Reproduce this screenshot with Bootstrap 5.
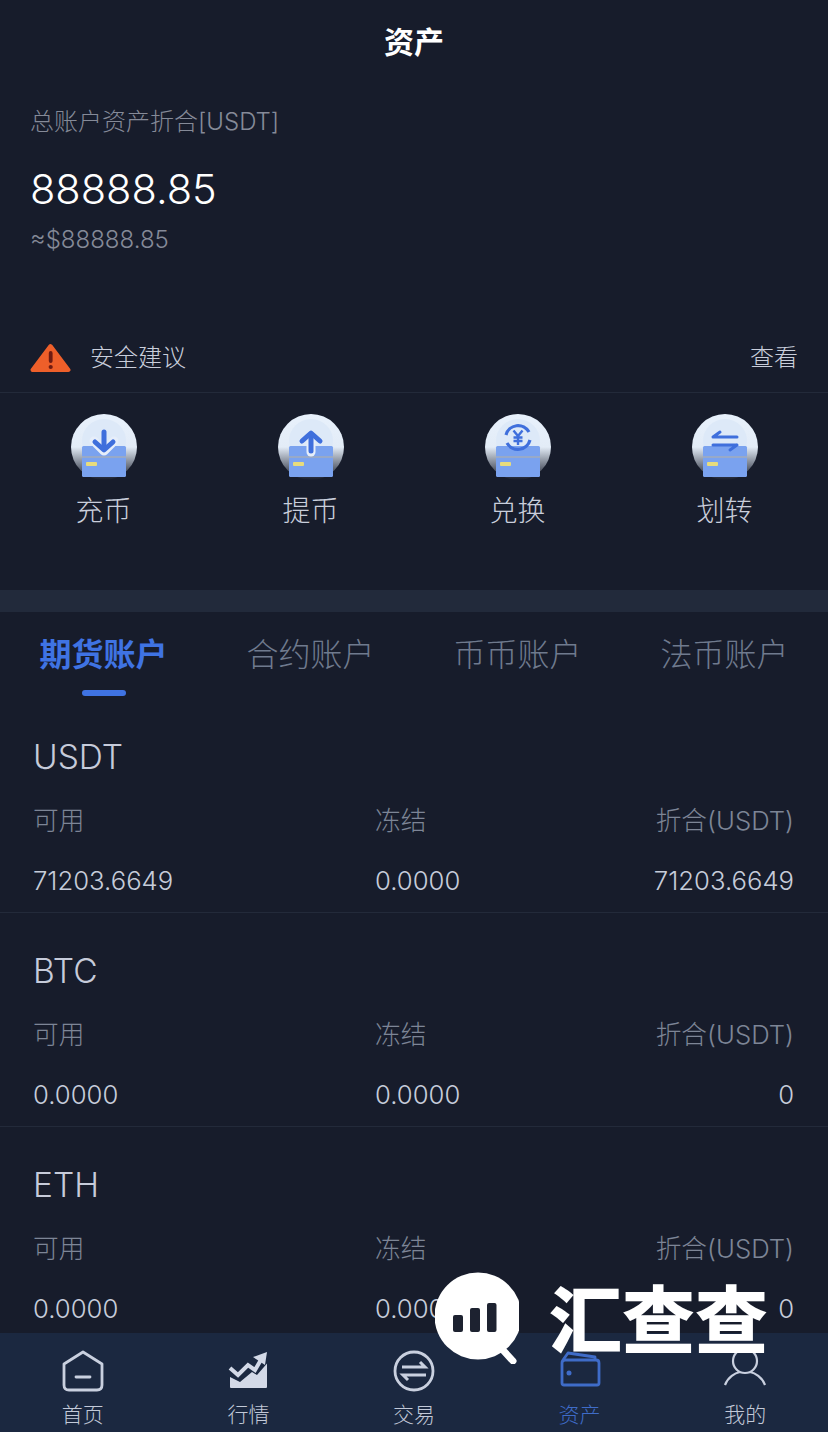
<!DOCTYPE html>
<html lang="zh-CN">
<head>
  <meta charset="UTF-8">
  <meta name="viewport" content="width=device-width, initial-scale=1.0">
  <title>资产</title>
  <link href="https://cdn.jsdelivr.net/npm/bootstrap@5.3.3/dist/css/bootstrap.min.css" rel="stylesheet" crossorigin="anonymous">
  <style>
    html, body { height: 100%; }
    body {
      background: #171c2b;
      font-family: Inter, "Noto Sans CJK SC", sans-serif;
      font-weight: 300;
      overflow: hidden;
    }
    .phone { position: relative; width: 828px; height: 1432px; overflow: hidden; }

    .page-title { height: 84px; line-height: 85px; font-size: 30px; font-weight: 700; color: #fff; text-align: center; }
    .summary { padding: 20px 30px 0; height: 238px; }
    .summary-label { font-size: 24px; line-height: 36px; color: #858a98; }
    .summary-total { font-size: 41.500px; line-height: 52px; color: #fff; margin-top: 23px; }
    .summary-usd { font-size: 24px; line-height: 32px; color: #858a98; margin-top: 9px; }

    .safety-row { height: 71px; padding: 2px 30px 0 30px; border-bottom: 1px solid #232a3a; color: #c9cedb; font-size: 24px; }
    .safety-row svg { width: 41px; height: 30px; margin-right: 19px; }

    .action-row { height: 197px; padding-top: 21px; }
    .action-icon { width: 66px; height: 66px; display: block; margin: 0 auto; }
    .action-name { font-size: 28px; line-height: 36px; margin-top: 13px; color: #c9cedb; }

    .band { height: 22px; background: #222a3b; }

    .acct-tabs { height: 87px; }
    .acct-tab { position: relative; flex: 1 1 0; text-align: center; font-size: 32px; line-height: 86px; color: #6f7a8e; }
    .acct-tab.is-on { color: #3f73e3; font-weight: 700; }
    .acct-tab.is-on::after {
      content: ""; position: absolute; left: 50%; bottom: 3px; width: 44px; height: 6px;
      margin-left: -22px; border-radius: 3px; background: #3f73e3;
    }

    .asset { height: 214px; padding: 38px 34px 0 33px; border-bottom: 1px solid #232a3a; }
    .asset-name { font-size: 33.500px; line-height: 40px; color: #c6cbda; }
    .asset-cols { display: grid; grid-template-columns: 342px 1fr auto; }
    .asset-cols.is-head { margin-top: 26px; font-size: 25.700px; line-height: 36px; color: #7d8596; }
    .asset-cols.is-vals { margin-top: 24px; font-size: 25.700px; line-height: 36px; color: #c6ccda; }

    .tabbar { position: absolute; left: 0; right: 0; bottom: 0; height: 99px; background: #1b2840; }
    .tabbar-item { flex: 1 1 0; text-align: center; color: #c2c9d8; font-size: 21px; line-height: 26px; padding-top: 16px; }
    .tabbar-item svg { display: block; width: 44px; height: 44px; margin: 0 auto 9px; }
    .tabbar-item.is-on { color: #3f6cc8; }

    .wm { position: absolute; left: 435px; top: 1272px; display: flex; align-items: flex-start; }
    .wm svg { width: 84px; height: 92px; display: block; }
    .wm-text { margin-left: 30px; margin-top: 9px; font-size: 73px; line-height: 80px; font-weight: 900; color: #fff; white-space: nowrap; }
  </style>
</head>
<body>
  <svg width="0" height="0" class="position-absolute">
    <defs>
      <linearGradient id="discFill" x1="0" y1="0" x2="0" y2="1">
        <stop offset="0" stop-color="#e8f1fc"/>
        <stop offset="0.5" stop-color="#e3ecf7"/>
        <stop offset="1" stop-color="#e3ecf7" stop-opacity="0"/>
      </linearGradient>
      <symbol id="walletBase" viewBox="0 0 66 66">
        <circle cx="33" cy="33" r="33" fill="url(#discFill)"/>
        <circle cx="33" cy="27" r="22" fill="#dde9f8"/>
        <rect x="11" y="32" width="44" height="31" rx="1.500" fill="#7aa2ef"/>
        <rect x="11" y="42" width="44" height="2" fill="#98a9c8"/>
        <rect x="15" y="48" width="11" height="4" rx="1" fill="#e8dc7c"/>
      </symbol>
    </defs>
  </svg>

  <div class="phone">
    <div class="page-title">资产</div>

    <div class="summary">
      <div class="summary-label">总账户资产折合[USDT]</div>
      <div class="summary-total">88888.85</div>
      <div class="summary-usd">≈$88888.85</div>
    </div>

    <div class="safety-row d-flex align-items-center">
      <svg viewBox="0 0 41 30">
        <path d="M20.500 3 L38.500 27 H2.500 Z" fill="#ee5f2a" stroke="#ee5f2a" stroke-width="4" stroke-linejoin="round"/>
        <rect x="18.800" y="8" width="3.800" height="12" rx="1.900" fill="#6e1b12"/>
        <circle cx="20.700" cy="24" r="2.100" fill="#6e1b12"/>
      </svg>
      <span>安全建议</span>
      <span class="ms-auto">查看</span>
    </div>

    <div class="action-row row g-0 text-center">
      <div class="col-3">
        <svg class="action-icon" viewBox="0 0 66 66">
          <use href="#walletBase"/>
          <path d="M23 27 L33 37 L43 27" stroke="#e6eefa" stroke-width="9" stroke-linecap="round" stroke-linejoin="round" fill="none"/>
          <path d="M33 18 V34" stroke="#3f6fdc" stroke-width="5" stroke-linecap="round" fill="none"/>
          <path d="M24 28 L33 36 L42 28" stroke="#3f6fdc" stroke-width="5" stroke-linecap="round" stroke-linejoin="round" fill="none"/>
        </svg>
        <div class="action-name">充币</div>
      </div>
      <div class="col-3">
        <svg class="action-icon" viewBox="0 0 66 66">
          <use href="#walletBase"/>
          <path d="M33 38 V21" stroke="#e6eefa" stroke-width="9" stroke-linecap="round" fill="none"/>
          <path d="M33 37 V21" stroke="#3f6fdc" stroke-width="5" stroke-linecap="round" fill="none"/>
          <path d="M24 27 L33 19 L42 27" stroke="#3f6fdc" stroke-width="5" stroke-linecap="round" stroke-linejoin="round" fill="none"/>
        </svg>
        <div class="action-name">提币</div>
      </div>
      <div class="col-3">
        <svg class="action-icon" viewBox="0 0 66 66">
          <use href="#walletBase"/>
          <path d="M21 21 A12.500 12.500 0 0 1 44 18" stroke="#3f6fdc" stroke-width="3.200" fill="none"/>
          <path d="M45 26 A12.500 12.500 0 0 1 22 29" stroke="#3f6fdc" stroke-width="3.200" fill="none"/>
          <path d="M28.500 16.500 L33 22 L37.500 16.500 M33 22 V31 M28.500 23.500 H37.500 M28.500 27 H37.500" stroke="#3f6fdc" stroke-width="2.400" fill="none"/>
        </svg>
        <div class="action-name">兑换</div>
      </div>
      <div class="col-3">
        <svg class="action-icon" viewBox="0 0 66 66">
          <use href="#walletBase"/>
          <path d="M21 23 H45 M21 23 L28 18" stroke="#3f6fdc" stroke-width="3" stroke-linecap="round" fill="none"/>
          <path d="M21 31 H45 M45 31 L38 36" stroke="#3f6fdc" stroke-width="3" stroke-linecap="round" fill="none"/>
        </svg>
        <div class="action-name">划转</div>
      </div>
    </div>

    <div class="band"></div>

    <div class="acct-tabs d-flex px-0">
      <div class="acct-tab is-on">期货账户</div>
      <div class="acct-tab">合约账户</div>
      <div class="acct-tab">币币账户</div>
      <div class="acct-tab">法币账户</div>
    </div>

    <div class="asset">
      <div class="asset-name">USDT</div>
      <div class="asset-cols is-head"><span>可用</span><span>冻结</span><span>折合(USDT)</span></div>
      <div class="asset-cols is-vals"><span>71203.6649</span><span>0.0000</span><span>71203.6649</span></div>
    </div>
    <div class="asset">
      <div class="asset-name">BTC</div>
      <div class="asset-cols is-head"><span>可用</span><span>冻结</span><span>折合(USDT)</span></div>
      <div class="asset-cols is-vals"><span>0.0000</span><span>0.0000</span><span>0</span></div>
    </div>
    <div class="asset">
      <div class="asset-name">ETH</div>
      <div class="asset-cols is-head"><span>可用</span><span>冻结</span><span>折合(USDT)</span></div>
      <div class="asset-cols is-vals"><span>0.0000</span><span>0.0000</span><span>0</span></div>
    </div>

    <nav class="tabbar d-flex">
      <div class="tabbar-item">
        <svg viewBox="0 0 44 44" fill="none" stroke="#c9d0df" stroke-width="2.800" stroke-linejoin="round">
          <path d="M22 3 L41 15 V36 Q41 41 36 41 H8 Q3 41 3 36 V15 Z"/>
          <path d="M15 28 H29" stroke-linecap="round"/>
        </svg>
        首页
      </div>
      <div class="tabbar-item">
        <svg viewBox="0 0 44 44">
          <path d="M4 28 L14 33 L26 23 L31 26 L41 14.500 V38 Q41 39 40 39 H5 Q4 39 4 38 Z" fill="#d3d9e7"/>
          <path d="M4 19 L12 26 L22 16 L29 21 L36 9" fill="none" stroke="#d3d9e7" stroke-width="4"/>
          <path d="M27 8 L41 3 L39 16 Z" fill="#d3d9e7"/>
        </svg>
        行情
      </div>
      <div class="tabbar-item">
        <svg viewBox="0 0 44 44" fill="none" stroke="#c9d0df">
          <circle cx="22" cy="22" r="19" stroke-width="2.800"/>
          <path d="M10 18 H33 L28 13" stroke-width="3"/>
          <path d="M34 26 H11 L16 31" stroke-width="3"/>
        </svg>
        交易
      </div>
      <div class="tabbar-item is-on">
        <svg viewBox="0 0 44 44" fill="none" stroke="#3f6cc8" stroke-width="2.800" stroke-linejoin="round">
          <path d="M4 14 Q4 11 7 11 H38 Q41 11 41 14 V34 Q41 36 39 36 H6 Q4 36 4 34 Z"/>
          <path d="M5 11 L10 4 L37 8 V11"/>
          <circle cx="11" cy="24" r="2.500" fill="#3f6cc8" stroke="none"/>
        </svg>
        资产
      </div>
      <div class="tabbar-item">
        <svg viewBox="0 0 44 44" fill="none" stroke="#c9d0df" stroke-width="2.200">
          <circle cx="22" cy="12" r="12"/>
          <path d="M2 36 C5 28 12 24 17 23 M42 36 C39 28 32 24 27 23"/>
        </svg>
        我的
      </div>
    </nav>

    <div class="wm">
      <svg viewBox="0 0 84 92">
        <path d="M66 76 L78 89" stroke="#fff" stroke-width="7" stroke-linecap="round"/>
        <circle cx="43" cy="44" r="43.500" fill="#fff"/>
        <rect x="18" y="43" width="10" height="17" rx="2" fill="#1d2230"/>
        <rect x="35" y="36" width="10" height="24" rx="2" fill="#1d2230"/>
        <rect x="52" y="31" width="9.500" height="29" rx="2" fill="#1d2230"/>
      </svg>
      <div class="wm-text">汇查查</div>
    </div>
  </div>

  <script src="https://cdn.jsdelivr.net/npm/bootstrap@5.3.3/dist/js/bootstrap.bundle.min.js" crossorigin="anonymous"></script>
</body>
</html>
